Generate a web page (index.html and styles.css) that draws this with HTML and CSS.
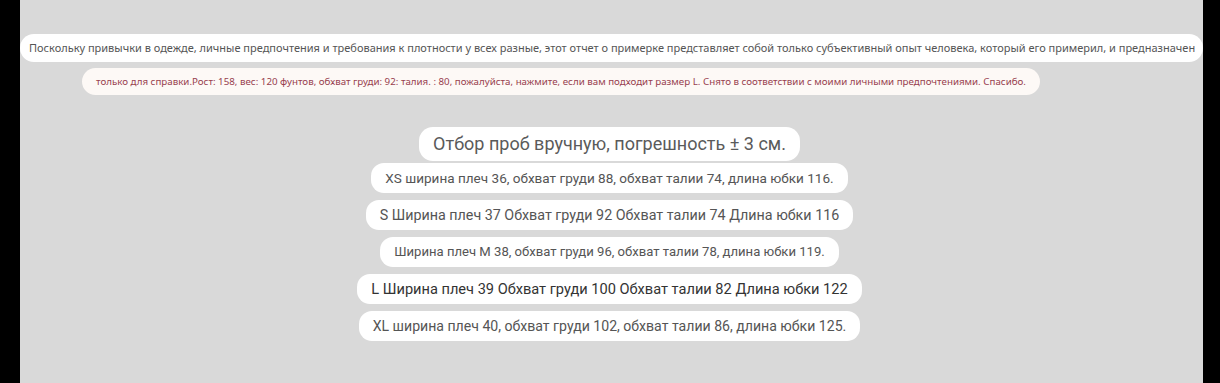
FILE: index.html
```html
<!DOCTYPE html>
<html lang="ru">
<head>
<meta charset="utf-8">
<title>Размеры</title>
<link rel="stylesheet" href="styles.css">
</head>
<body>
<div class="page">
  <main class="panel">
    <p class="note">Поскольку привычки в одежде, личные предпочтения и требования к плотности у всех разные, этот отчет о примерке представляет собой только субъективный опыт человека, который его примерил, и предназначен</p>
    <p class="note2">только для справки.Рост: 158, вес: 120 фунтов, обхват груди: 92: талия. : 80, пожалуйста, нажмите, если вам подходит размер L. Снято в соответствии с моими личными предпочтениями. Спасибо.</p>
    <h1 class="title">Отбор проб вручную, погрешность ± 3 см.</h1>
    <ul class="sizes">
      <li class="size size-xs">XS ширина плеч 36, обхват груди 88, обхват талии 74, длина юбки 116.</li>
      <li class="size size-s">S Ширина плеч 37 Обхват груди 92 Обхват талии 74 Длина юбки 116</li>
      <li class="size size-m">Ширина плеч M 38, обхват груди 96, обхват талии 78, длина юбки 119.</li>
      <li class="size size-l">L Ширина плеч 39 Обхват груди 100 Обхват талии 82 Длина юбки 122</li>
      <li class="size size-xl">XL ширина плеч 40, обхват груди 102, обхват талии 86, длина юбки 125.</li>
    </ul>
  </main>
</div>
</body>
</html>
```
FILE: styles.css
```css
html, body {
  margin: 0;
  padding: 0;
  background: #000;
}
body {
  font-family: "Noto Sans", "DejaVu Sans", sans-serif;
}
.page {
  display: flex;
  height: 383px;
  background: #000;
}
.panel {
  margin-left: 20px;
  width: 1183px;
  background: #d9d9d9;
  padding: 34px 1px 0 0;
  display: flex;
  flex-direction: column;
  align-items: center;
  box-sizing: border-box;
}
.note {
  margin: 0;
  width: calc(100% + 1px);
  align-self: flex-start;
  box-sizing: border-box;
  height: 28px;
  line-height: 28px;
  padding: 0 9px;
  background: #fff;
  border-radius: 14px;
  color: #555;
  font-size: 11px;
  white-space: nowrap;
  overflow: hidden;
}
.note2 {
  margin: 6px 0 0 62px;
  align-self: flex-start;
  height: 27px;
  line-height: 27px;
  padding: 0 14px;
  background: #fdf9f6;
  border-radius: 14px;
  color: #98404e;
  font-size: 9.75px;
  white-space: nowrap;
}
.title {
  margin: 32px 3px 0 0;
  height: 34px;
  line-height: 34px;
  padding: 0 14px;
  background: #fff;
  border-radius: 14px;
  color: #5a5a5a;
  font-family: Roboto, "Noto Sans", sans-serif;
  font-size: 18px;
  font-weight: 400;
  white-space: nowrap;
}
.sizes {
  list-style: none;
  margin: 2px 3px 0 0;
  padding: 0;
  display: flex;
  flex-direction: column;
  align-items: center;
  gap: 7px;
}
.size {
  height: 30px;
  line-height: 30px;
  padding: 0 14px;
  background: #fff;
  border-radius: 13px;
  color: #555;
  font-family: Roboto, "Noto Sans", sans-serif;
  font-size: 14px;
  white-space: nowrap;
}
.size-xs {
  font-size: 13.55px;
}
.size-s {
  font-size: 14.3px;
}
.size-m {
  font-size: 13.1px;
}
.size-l {
  color: #333;
  font-size: 14.6px;
}
.size-xl {
  font-size: 14.1px;
}
```
